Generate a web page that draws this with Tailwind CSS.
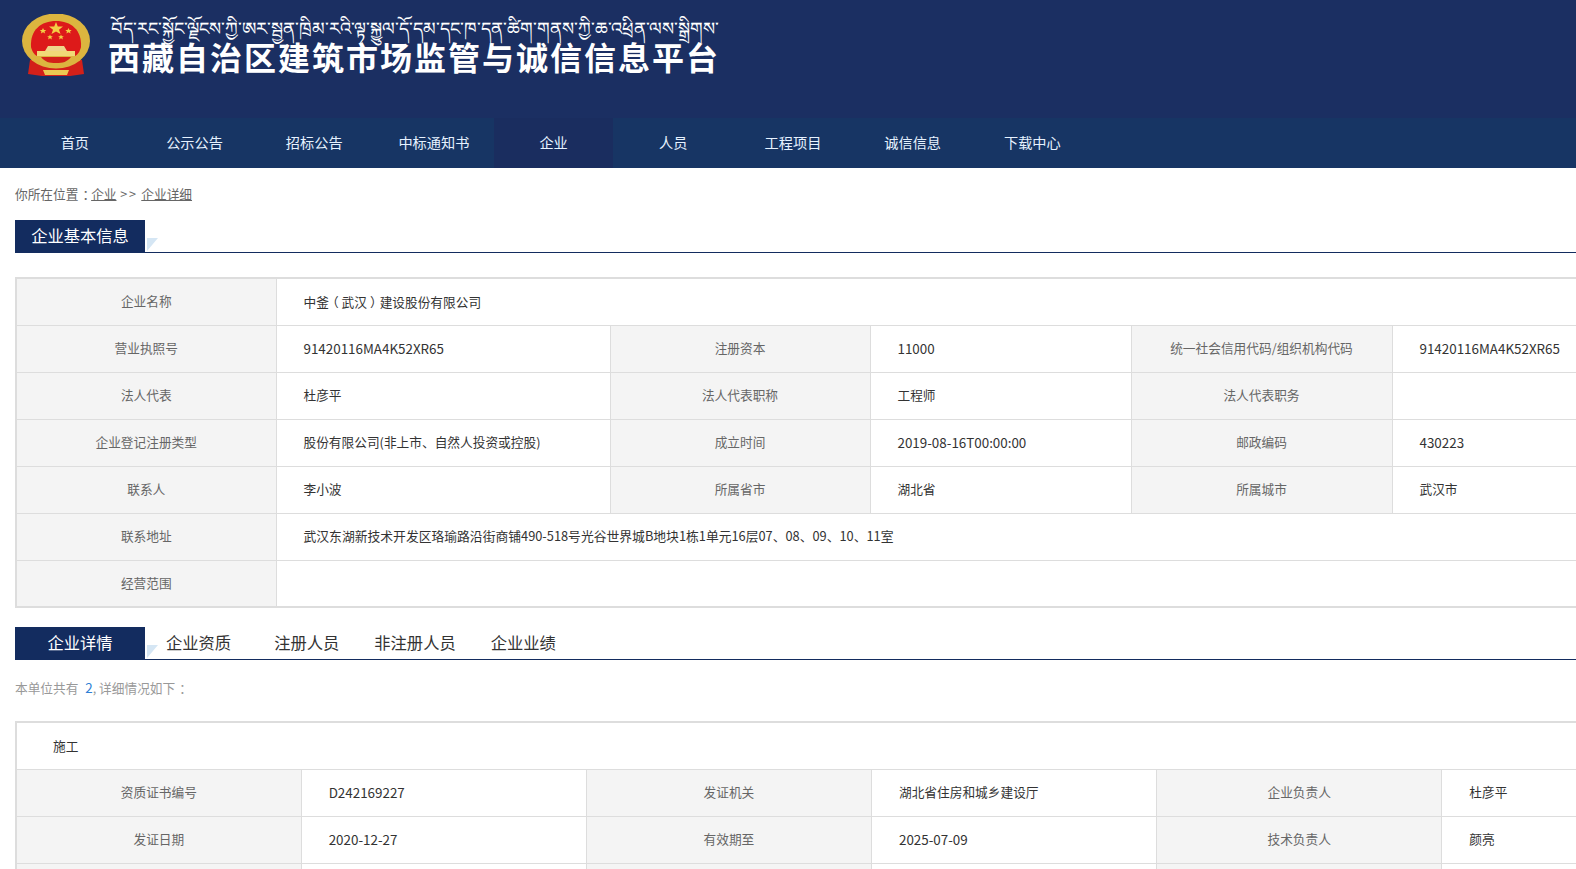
<!DOCTYPE html>
<html lang="zh-CN">
<head>
    <meta charset="UTF-8">
    <title>西藏自治区建筑市场监管与诚信信息平台</title>
    <script src="https://cdn.jsdelivr.net/npm/@tailwindcss/browser@4"></script>
</head>
<body class="bg-white h-[869px] overflow-hidden font-['Noto_Sans_CJK_SC',sans-serif] text-[12.7px] text-[#333]">
    <!-- header -->
    <header class="bg-[#1b2f62] h-[118px] flex items-start pl-[22px] pt-[14px]">
        <svg width="68" height="63" viewBox="0 0 68 63" class="shrink-0 blur-[0.4px]">
            <path d="M8 46 L6 60 L20 62 L48 62 L62 60 L60 46 Z" fill="#d32019"/>
            <ellipse cx="34" cy="27" rx="34" ry="27.500" fill="#dcb53f"/>
            <path d="M9 33 C8 16 19 7 34 7 C49 7 60 16 59 33 C57 41 52 46 34 46 C16 46 11 41 9 33 Z" fill="#dd1a1a"/>
            <polygon points="34,8 35.800,12.500 41,12.500 37,15.700 38.500,20 34,17.400 29.500,20 31,15.700 27,12.500 32.200,12.500" fill="#f3cf45"/>
            <polygon points="21,14 22,16 24.200,16 22.500,17.400 23.100,19.500 21,18.300 18.900,19.500 19.500,17.400 17.800,16 20,16" fill="#f3cf45"/>
            <polygon points="46.500,14 47.500,16 49.700,16 48,17.400 48.600,19.500 46.500,18.300 44.400,19.500 45,17.400 43.300,16 45.500,16" fill="#f3cf45"/>
            <polygon points="28,20.500 28.800,22.300 30.800,22.300 29.300,23.500 29.900,25.500 28,24.300 26.100,25.500 26.700,23.500 25.200,22.300 27.200,22.300" fill="#f3cf45"/>
            <polygon points="39,20.500 39.800,22.300 41.800,22.300 40.300,23.500 40.900,25.500 39,24.300 37.100,25.500 37.700,23.500 36.200,22.300 38.200,22.300" fill="#f3cf45"/>
            <path d="M26 32 H42 L45 37 H23 Z" fill="#eed68a"/>
            <rect x="15" y="37" width="38" height="5" fill="#f1d977"/>
            <path d="M12 42 H56 C52 50 44 53 34 53 C24 53 16 50 12 42 Z" fill="#dcb53f"/>
            <path d="M19 43 H49 C45 48 41 49 34 49 C27 49 23 48 19 43 Z" fill="#d32019"/>
            <path d="M21 56 H47 L45 61 H23 Z" fill="#ecc852"/>
        </svg>
        <div class="ml-[19px] pt-[2px]">
            <div class="pl-[2px] text-[17.97px] leading-[25px] h-[25px] text-white whitespace-nowrap font-['DejaVu_Sans',sans-serif]">བོད་རང་སྐྱོང་ལྗོངས་ཀྱི་ཨར་སྦྱན་ཁྲིམ་རའི་ལྟ་སྐྱུལ་དོ་དམ་དང་ཁ་དན་ཚིག་གནས་ཀྱི་ཆ་འཕྲིན་ལས་སྒྲིགས་</div>
            <h1 class="-ml-[1px] text-[32px] leading-[30px] tracking-[2px] font-bold text-white whitespace-nowrap">西藏自治区建筑市场监管与诚信信息平台</h1>
        </div>
    </header>

    <!-- nav -->
    <nav class="bg-[#173564] h-[50px] pl-[15px] flex text-[14.2px] text-[#e6f2ff]">
        <a href="#" class="w-[119.7px] pb-[1px] flex items-center justify-center">首页</a>
        <a href="#" class="w-[119.7px] pb-[1px] flex items-center justify-center">公示公告</a>
        <a href="#" class="w-[119.7px] pb-[1px] flex items-center justify-center">招标公告</a>
        <a href="#" class="w-[119.7px] pb-[1px] flex items-center justify-center">中标通知书</a>
        <a href="#" class="w-[119.7px] pb-[1px] flex items-center justify-center bg-[#1a2d5f]">企业</a>
        <a href="#" class="w-[119.7px] pb-[1px] flex items-center justify-center">人员</a>
        <a href="#" class="w-[119.7px] pb-[1px] flex items-center justify-center">工程项目</a>
        <a href="#" class="w-[119.7px] pb-[1px] flex items-center justify-center">诚信信息</a>
        <a href="#" class="w-[119.7px] pb-[1px] flex items-center justify-center">下载中心</a>
    </nav>

    <main class="pl-[15px]">
        <p class="mt-[16px] h-[20px] leading-[20px] text-[#666] whitespace-nowrap">你所在位置<span class="pl-[4px] tracking-[-4px]">：</span><a href="#" class="underline">企业</a> <span class="mx-[1px] tracking-[1.5px]">&gt;&gt;</span> <a href="#" class="underline">企业详细</a></p>

        <!-- basic info -->
        <div class="mt-[16px] h-[33px] flex border-b border-[#132c5f]">
            <h2 class="w-[130px] h-[33px] shrink-0 bg-[#132c5f] text-white text-[16.3px] font-normal leading-[30px] text-center">企业基本信息</h2>
            <span class="ml-[2px] mt-[18px] w-[11px] h-[13px] bg-[#d5e6f4] [clip-path:polygon(0_0,100%_0,0_100%)]"></span>
        </div>

        <div class="mt-[24px] overflow-hidden">
            <table class="table-fixed w-[1636px] border-collapse border-2 border-[#ddd] [&_td]:h-[47px] [&_th]:h-[47px] [&_td]:border [&_th]:border [&_td]:border-[#ddd] [&_th]:border-[#ddd] [&_th]:bg-[#f4f4f4] [&_th]:font-normal [&_th]:text-[#666] [&_th]:pb-[2px] [&_td]:pb-[1px] [&_td]:pl-[27px] [&_td]:text-[#333]">
                <colgroup>
                    <col class="w-[260px]"><col class="w-[334px]"><col class="w-[260px]"><col class="w-[261px]"><col class="w-[261px]"><col class="w-[260px]">
                </colgroup>
                <tr><th>企业名称</th><td colspan="5">中釜<span class="inline-block -translate-x-[3px]">（</span>武汉<span class="inline-block translate-x-[3px]">）</span>建设股份有限公司</td></tr>
                <tr><th>营业执照号</th><td class="text-[13.4px]">91420116MA4K52XR65</td><th>注册资本</th><td class="text-[13.4px]">11000</td><th>统一社会信用代码/组织机构代码</th><td class="text-[13.4px]">91420116MA4K52XR65</td></tr>
                <tr><th>法人代表</th><td>杜彦平</td><th>法人代表职称</th><td>工程师</td><th>法人代表职务</th><td></td></tr>
                <tr><th>企业登记注册类型</th><td>股份有限公司(非上市、自然人投资或控股)</td><th>成立时间</th><td class="text-[13.4px]">2019-08-16T00:00:00</td><th>邮政编码</th><td class="text-[13.4px]">430223</td></tr>
                <tr><th>联系人</th><td>李小波</td><th>所属省市</th><td>湖北省</td><th>所属城市</th><td>武汉市</td></tr>
                <tr><th>联系地址</th><td colspan="5" class="text-[12.8px]">武汉东湖新技术开发区珞瑜路沿街商铺490-518号光谷世界城B地块1栋1单元16层07、08、09、10、11室</td></tr>
                <tr><th>经营范围</th><td colspan="5"></td></tr>
            </table>
        </div>

        <!-- tabs -->
        <div class="mt-[19px] h-[33px] flex border-b border-[#132c5f] text-[16.3px] leading-[30px] whitespace-nowrap">
            <a href="#" class="w-[130px] h-[33px] shrink-0 bg-[#132c5f] text-white text-center">企业详情</a>
            <span class="ml-[2px] mt-[18px] w-[11px] h-[13px] bg-[#d5e6f4] [clip-path:polygon(0_0,100%_0,0_100%)]"></span>
            <a href="#" class="ml-[8px]">企业资质</a>
            <a href="#" class="ml-[43px]">注册人员</a>
            <a href="#" class="ml-[35px]">非注册人员</a>
            <a href="#" class="ml-[35px]">企业业绩</a>
        </div>

        <p class="mt-[17px] h-[20px] leading-[20px] text-[#999] whitespace-nowrap">本单位共有 <span class="ml-[4px] text-[13.4px] text-[#2f7fd6]">2</span>, 详细情况如下<span class="pl-[4px]">：</span></p>

        <!-- qualification -->
        <div class="mt-[24px] overflow-hidden">
            <table class="table-fixed w-[1713px] border-collapse border-2 border-[#ddd] [&_td]:h-[47px] [&_th]:h-[47px] [&_td]:border [&_th]:border [&_td]:border-[#ddd] [&_th]:border-[#ddd] [&_th]:bg-[#f4f4f4] [&_th]:font-normal [&_th]:text-[#666] [&_th]:pb-[2px] [&_td]:pb-[1px] [&_td]:pl-[27px] [&_td]:text-[#333]">
                <colgroup>
                    <col class="w-[285px]"><col class="w-[285px]"><col class="w-[285px]"><col class="w-[285px]"><col class="w-[285px]"><col class="w-[285px]">
                </colgroup>
                <tr><td colspan="6" class="!pl-[36px]">施工</td></tr>
                <tr><th>资质证书编号</th><td class="text-[13.4px]">D242169227</td><th>发证机关</th><td>湖北省住房和城乡建设厅</td><th>企业负责人</th><td>杜彦平</td></tr>
                <tr><th>发证日期</th><td class="text-[13.4px]">2020-12-27</td><th>有效期至</th><td class="text-[13.4px]">2025-07-09</td><th>技术负责人</th><td>颜亮</td></tr>
                <tr><th></th><td></td><th></th><td></td><th></th><td></td></tr>
            </table>
        </div>
    </main>
</body>
</html>
